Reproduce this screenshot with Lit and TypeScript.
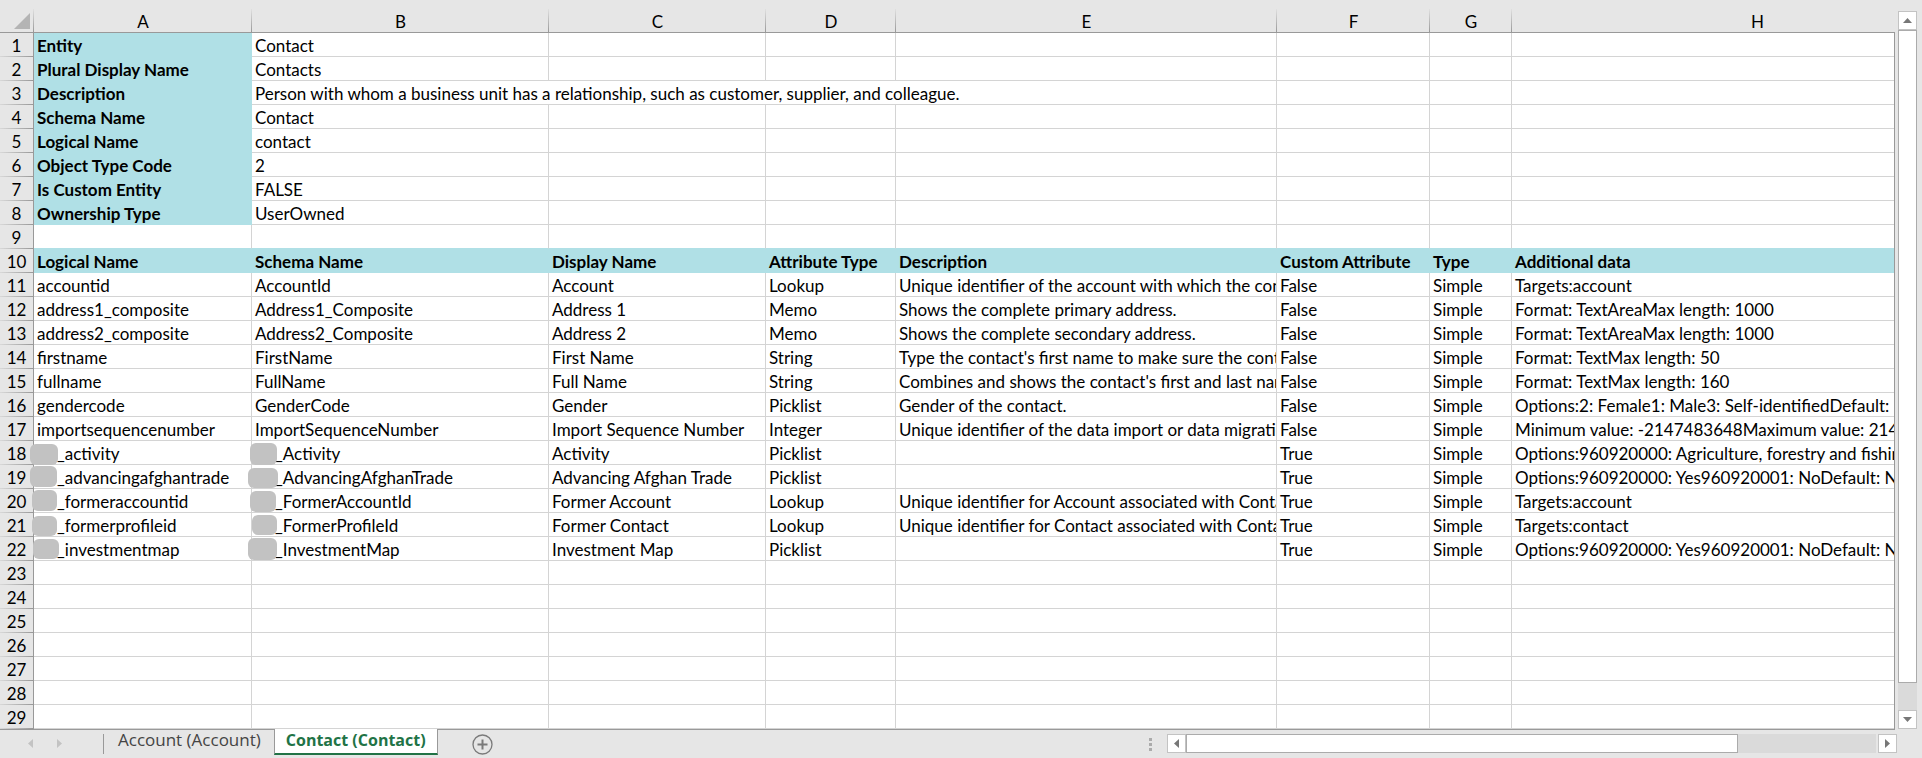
import { LitElement, html, css, nothing } from "lit";
import { customElement, state } from "lit/decorators.js";
import { styleMap } from "lit/directives/style-map.js";

/** Grey patch that hides a publisher prefix: left, top, width and height inside its cell. */
type Mask = [number, number, number, number];

interface Cell {
  text: string;
  mask?: Mask;
}

const COLUMNS = ["A", "B", "C", "D", "E", "F", "G", "H"];

const PROPERTIES: [string, string][] = [
  ["Entity", "Contact"],
  ["Plural Display Name", "Contacts"],
  ["Description", "Person with whom a business unit has a relationship, such as customer, supplier, and colleague."],
  ["Schema Name", "Contact"],
  ["Logical Name", "contact"],
  ["Object Type Code", "2"],
  ["Is Custom Entity", "FALSE"],
  ["Ownership Type", "UserOwned"],
];

const HEADINGS = [
  "Logical Name", "Schema Name", "Display Name", "Attribute Type",
  "Description", "Custom Attribute", "Type", "Additional data",
];

const m = (text: string, ...mask: Mask): Cell => ({ text, mask });

const ATTRIBUTES: (string | Cell)[][] = [
  ["accountid", "AccountId", "Account", "Lookup", "Unique identifier of the account with which the cont", "False", "Simple", "Targets:account"],
  ["address1_composite", "Address1_Composite", "Address 1", "Memo", "Shows the complete primary address.", "False", "Simple", "Format: TextAreaMax length: 1000"],
  ["address2_composite", "Address2_Composite", "Address 2", "Memo", "Shows the complete secondary address.", "False", "Simple", "Format: TextAreaMax length: 1000"],
  ["firstname", "FirstName", "First Name", "String", "Type the contact's first name to make sure the cont", "False", "Simple", "Format: TextMax length: 50"],
  ["fullname", "FullName", "Full Name", "String", "Combines and shows the contact's first and last nam", "False", "Simple", "Format: TextMax length: 160"],
  ["gendercode", "GenderCode", "Gender", "Picklist", "Gender of the contact.", "False", "Simple", "Options:2: Female1: Male3: Self-identifiedDefault: N"],
  ["importsequencenumber", "ImportSequenceNumber", "Import Sequence Number", "Integer", "Unique identifier of the data import or data migratio", "False", "Simple", "Minimum value: -2147483648Maximum value: 2147"],
  [m("_activity", -4, 3, 28, 21), m("_Activity", -2, 2, 27, 22), "Activity", "Picklist", "", "True", "Simple", "Options:960920000: Agriculture, forestry and fishing"],
  [m("_advancingafghantrade", -4, 1, 27, 21), m("_AdvancingAfghanTrade", -4, 3, 30, 20), "Advancing Afghan Trade", "Picklist", "", "True", "Simple", "Options:960920000: Yes960920001: NoDefault: N/A"],
  [m("_formeraccountid", -2, 1, 25, 21), m("_FormerAccountId", -2, 2, 26, 21), "Former Account", "Lookup", "Unique identifier for Account associated with Conta", "True", "Simple", "Targets:account"],
  [m("_formerprofileid", -2, 3, 25, 20), m("_FormerProfileId", 0, 2, 25, 20), "Former Contact", "Lookup", "Unique identifier for Contact associated with Conta", "True", "Simple", "Targets:contact"],
  [m("_investmentmap", -1, 2, 26, 20), m("_InvestmentMap", -4, 1, 29, 22), "Investment Map", "Picklist", "", "True", "Simple", "Options:960920000: Yes960920001: NoDefault: N/A"],
];

const BLANK_ROWS = [23, 24, 25, 26, 27, 28, 29];

const arrow = (points: string) => html`
  <svg width="11" height="11" viewBox="0 0 11 11" aria-hidden="true"><polygon points=${points} fill="currentColor"></polygon></svg>
`;
const UP = "5.5,3 10,8 1,8";
const DOWN = "1,3 10,3 5.5,8";
const LEFT = "8,1 8,10 3,5.5";
const RIGHT = "3,1 8,5.5 3,10";

@customElement("sheet-grid")
export class SheetGrid extends LitElement {
  static styles = css`
    :host {
      display: block;
      min-width: 0;
      overflow: hidden;
      padding-right: 1px;
      background: linear-gradient(#e6e6e6 32px, #999 32px);
    }
    .clip { overflow: hidden; }
    table {
      width: 2003px;
      min-width: 100%;
      table-layout: fixed;
      border-collapse: separate;
      border-spacing: 0;
      background: #fff;
      color: #000;
      font-size: 17px;
      line-height: 25px;
    }
    .w-index { width: 34px; }
    .w-a { width: 218px; }
    .w-b { width: 297px; }
    .w-c { width: 217px; }
    .w-d { width: 130px; }
    .w-e { width: 381px; }
    .w-f { width: 153px; }
    .w-g { width: 82px; }
    th, td {
      height: 23px;
      padding: 0;
      text-align: left;
      vertical-align: top;
      font-weight: 400;
      white-space: nowrap;
      border-right: 1px solid #d4d4d4;
      border-bottom: 1px solid #d4d4d4;
    }
    .text {
      display: block;
      height: 23px;
      padding-left: 3px;
      overflow: hidden;
    }
    .letter {
      height: 21px;
      padding-top: 11px;
      line-height: 21px;
      text-align: center;
      border-right: 0;
      border-bottom-color: #999;
      background:
        linear-gradient(#e0e0e0, #999) right bottom / 1px 23px no-repeat,
        #e6e6e6;
    }
    .corner svg { display: block; margin: 2px 0 0 14px; }
    .index {
      text-align: center;
      border-right-color: #999;
      border-bottom: 0;
      background:
        linear-gradient(90deg, #d8d8d8, #999) left bottom / 100% 1px no-repeat,
        #e6e6e6;
    }
    .index .text { padding: 0; }
    .filled {
      font-weight: 700;
      background: #b0e0e6;
      border-color: #b0e0e6;
    }
    .above-filled { border-bottom-color: #b0e0e6; }
    .masked { position: relative; }
    .masked .text { padding-left: 23px; }
    .mask {
      position: absolute;
      border-radius: 6px;
      background: #c2c2c2;
    }
  `;

  private cell(value: string | Cell) {
    if (typeof value === "string") {
      return html`<td>${value ? html`<span class="text">${value}</span>` : nothing}</td>`;
    }
    const [left, top, width, height] = value.mask!;
    const box = { left: `${left}px`, top: `${top}px`, width: `${width}px`, height: `${height}px` };
    return html`<td class="masked"><span class="text">${value.text}</span><span class="mask" style=${styleMap(box)}></span></td>`;
  }

  private blanks(count: number, extra = "") {
    return Array.from({ length: count }, () => html`<td class=${extra}></td>`);
  }

  private index(n: number) {
    return html`<th class="index" scope="row"><span class="text">${n}</span></th>`;
  }

  private property(label: string, value: string, index: number) {
    const spills = value.length > 60;
    return html`
      <tr>
        ${this.index(index + 1)}
        <td class="filled"><span class="text">${label}</span></td>
        <td colspan=${spills ? 4 : 1}><span class="text">${value}</span></td>
        ${this.blanks(spills ? 3 : 6)}
      </tr>
    `;
  }

  render() {
    return html`
      <div class="clip">
        <table aria-label="Contact (Contact)">
          <colgroup>
            <col class="w-index" /><col class="w-a" /><col class="w-b" /><col class="w-c" />
            <col class="w-d" /><col class="w-e" /><col class="w-f" /><col class="w-g" /><col />
          </colgroup>
          <thead>
            <tr>
              <td class="letter corner">
                <svg width="16" height="16" viewBox="0 0 16 16" aria-hidden="true"><polygon points="16,0 16,16 0,16" fill="#b4b4b4"></polygon></svg>
              </td>
              ${COLUMNS.map((letter) => html`<th class="letter" scope="col">${letter}</th>`)}
            </tr>
          </thead>
          <tbody>
            ${PROPERTIES.map(([label, value], i) => this.property(label, value, i))}
            <tr>${this.index(9)}${this.blanks(8, "above-filled")}</tr>
            <tr>
              ${this.index(10)}
              ${HEADINGS.map((text) => html`<td class="filled"><span class="text">${text}</span></td>`)}
            </tr>
            ${ATTRIBUTES.map((row, i) => html`
              <tr>${this.index(i + 11)}${row.map((value) => this.cell(value))}</tr>
            `)}
            ${BLANK_ROWS.map((n) => html`<tr>${this.index(n)}${this.blanks(8)}</tr>`)}
          </tbody>
        </table>
      </div>
    `;
  }
}

@customElement("scroll-track")
export class ScrollTrack extends LitElement {
  static properties = { vertical: { type: Boolean, reflect: true } };
  declare vertical: boolean;

  static styles = css`
    :host { display: flex; }
    :host([vertical]) { flex-direction: column; }
    button {
      display: flex;
      flex: none;
      align-items: center;
      justify-content: center;
      box-sizing: border-box;
      width: 19px;
      height: 19px;
      padding: 0;
      border: 1px solid #c3c3c3;
      background: #fff;
      color: #777;
    }
    .track { display: flex; flex: 1; background: #dadada; }
    .thumb {
      flex: 0 0 80%;
      box-sizing: border-box;
      border: 1px solid #ababab;
      background: #fff;
    }
    :host([vertical]) .track { flex-direction: column; }
    :host([vertical]) .thumb { flex-basis: 96%; }
    :host(:not([vertical])) .track { margin-right: 2px; }
  `;

  render() {
    const v = this.vertical;
    return html`
      <button aria-label=${v ? "Scroll up" : "Scroll left"}>${arrow(v ? UP : LEFT)}</button>
      <div class="track"><div class="thumb"></div></div>
      <button aria-label=${v ? "Scroll down" : "Scroll right"}>${arrow(v ? DOWN : RIGHT)}</button>
    `;
  }
}

@customElement("sheet-tabs")
export class SheetTabs extends LitElement {
  @state() private active = 1;

  static styles = css`
    :host {
      display: flex;
      align-items: flex-start;
      height: 28px;
    }
    button {
      padding: 0;
      border: 0;
      background: none;
      font-family: inherit;
    }
    .step {
      width: 11px;
      height: 11px;
      margin-top: 8px;
      color: #c3c3c3;
    }
    .step svg { display: block; }
    .steps {
      display: flex;
      gap: 18px;
      box-sizing: border-box;
      width: 104px;
      height: 24px;
      padding-left: 25px;
      background: linear-gradient(#999, #999) right bottom / 1px 20px no-repeat;
    }
    .tabs { display: flex; align-items: flex-start; }
    .tab {
      padding: 0 13px 0 14px;
      color: #444;
      font-family: "Open Sans", "Noto Sans", sans-serif;
      font-size: 17px;
      line-height: 20px;
      white-space: nowrap;
    }
    .tab.active {
      margin-top: -1px;
      padding: 1px 11px 3px;
      border: 1px solid #999;
      border-top: 0;
      border-bottom: 2px solid #217346;
      background: #fff;
      color: #217346;
      font-size: 16px;
      font-weight: 700;
    }
    .add { margin: 4px 0 0 34px; }
    .add svg { display: block; }
    .grip { margin: 8px 15px 0 auto; }
    .grip svg { display: block; }
    scroll-track {
      flex: 0 1 730px;
      height: 19px;
      margin-top: 4px;
    }
  `;

  render() {
    const names = ["Account (Account)", "Contact (Contact)"];
    return html`
      <div class="steps">
        <button class="step" aria-label="Previous sheet">${arrow(LEFT)}</button>
        <button class="step" aria-label="Next sheet">${arrow(RIGHT)}</button>
      </div>
      <div class="tabs" role="tablist">
        ${names.map((name, i) => html`
          <button
            class=${i === this.active ? "tab active" : "tab"}
            role="tab"
            aria-selected=${i === this.active}
            @click=${() => (this.active = i)}
          >${name}</button>
        `)}
      </div>
      <button class="add" aria-label="New sheet">
        <svg width="21" height="21" viewBox="0 0 21 21" fill="none" stroke="#7a7a7a">
          <circle cx="10.5" cy="10.5" r="9.5" stroke-width="1.3"></circle>
          <path d="M10.5 5.5v10M5.5 10.5h10" stroke-width="2"></path>
        </svg>
      </button>
      <span class="grip">
        <svg width="3" height="13" viewBox="0 0 3 13" fill="#ababab" aria-hidden="true">
          <path d="M0 0h3v3H0zM0 5h3v3H0zM0 10h3v3H0z"></path>
        </svg>
      </span>
      <scroll-track></scroll-track>
    `;
  }
}

@customElement("app-root")
export class AppRoot extends LitElement {
  static styles = css`
    :host {
      display: block;
      background: #e6e6e6;
      font-family: Lato, "Liberation Sans", sans-serif;
    }
    .sheet { display: flex; }
    sheet-grid { flex: 1; }
    .side { display: flex; padding: 11px 5px 0 3px; }
    .bottom {
      margin-right: 27px;
      border-top: 1px solid #999;
    }
    sheet-tabs { margin-right: -2px; }
  `;

  render() {
    return html`
      <div class="sheet">
        <sheet-grid></sheet-grid>
        <div class="side"><scroll-track vertical></scroll-track></div>
      </div>
      <div class="bottom"><sheet-tabs></sheet-tabs></div>
    `;
  }
}
